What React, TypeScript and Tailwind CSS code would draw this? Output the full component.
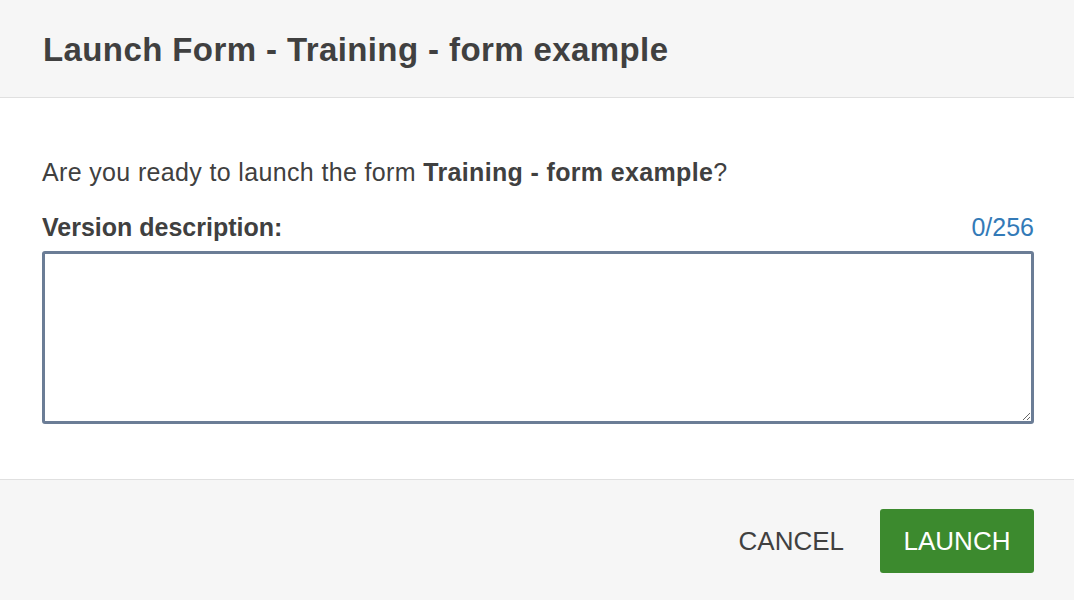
export default function App() {
  return (
    <div
      className="flex h-[600px] w-[1074px] flex-col bg-white text-[#404040]"
      style={{ fontFamily: '"Liberation Sans", Arial, Helvetica, sans-serif' }}
    >
      <header className="flex h-[98px] items-center border-b border-[#e0e0e0] bg-[#f6f6f6] px-[43px] pt-[2px]">
        <h1 className="text-[33px] font-bold tracking-[0.4px]">Launch Form - Training - form example</h1>
      </header>

      <main className="flex-1 pl-[42px] pr-[40px] pt-[58px]">
        <p className="text-[25px] leading-[32px] tracking-[0.35px]">
          Are you ready to launch the form <strong className="font-bold">Training - form example</strong>?
        </p>
        <div className="mt-[23px] flex items-center justify-between">
          <label htmlFor="desc" className="text-[25px] font-bold leading-[32px]">
            Version description:
          </label>
          <span className="text-[25px] leading-[32px] text-[#337ab7]">0/256</span>
        </div>
        <textarea
          id="desc"
          className="mt-[8px] block h-[173px] w-full resize-y rounded-[3px] border-[3px] border-[#6b7d96] bg-white p-2 text-[20px] outline-none"
        />
      </main>

      <footer className="flex h-[121px] items-center justify-end gap-[36px] border-t border-[#e0e0e0] bg-[#f6f6f6] pr-[40px] pt-[2px]">
        <button className="text-[26px] uppercase text-[#404040]">Cancel</button>
        <button className="h-[64px] w-[154px] rounded-[3px] bg-[#3c8a2e] text-[26px] uppercase text-white">
          Launch
        </button>
      </footer>
    </div>
  );
}
